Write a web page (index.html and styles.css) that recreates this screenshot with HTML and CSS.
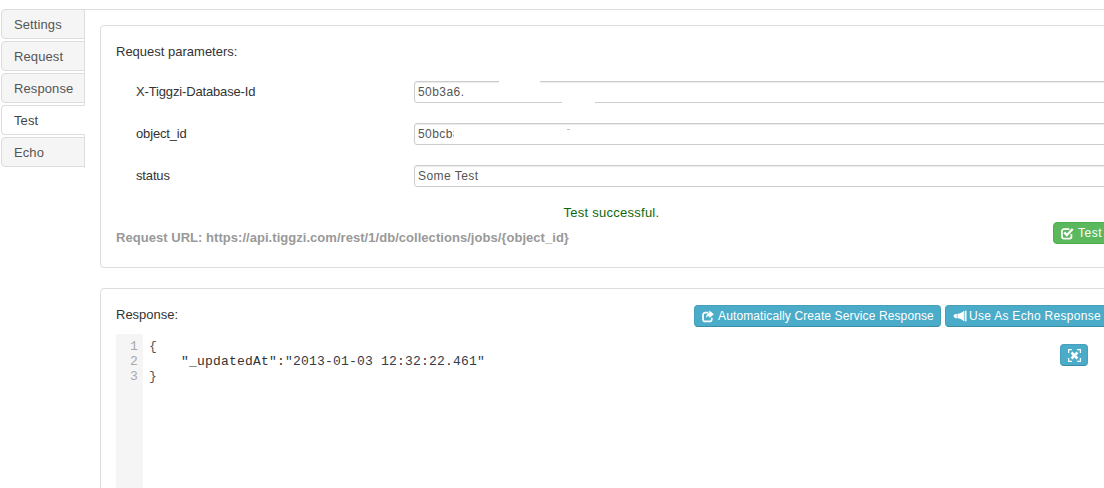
FILE: index.html
```html
<!DOCTYPE html>
<html lang="en">
<head>
<meta charset="utf-8">
<title>Service Test</title>
<link rel="stylesheet" href="styles.css">
</head>
<body>
<div class="app">
  <nav class="tabs">
    <a class="tab">Settings</a>
    <a class="tab">Request</a>
    <a class="tab">Response</a>
    <a class="tab active">Test</a>
    <a class="tab">Echo</a>
  </nav>
  <main class="content">
    <section class="panel panel-request">
      <div class="panel-title">Request parameters:</div>
      <div class="params">
        <label class="param-label">X-Tiggzi-Database-Id</label>
        <div class="field">
          <input class="input" type="text" value="50b3a6.">
          <span class="mask mask-a"></span>
          <span class="mask mask-b"></span>
          <span class="mask mask-c"></span>
        </div>
        <label class="param-label">object_id</label>
        <div class="field">
          <input class="input" type="text" value="50bcb8">
          <span class="mask mask-d"></span>
          <span class="speck"></span>
        </div>
        <label class="param-label">status</label>
        <div class="field">
          <input class="input" type="text" value="Some Test">
        </div>
      </div>
      <div class="status">Test successful.</div>
      <div class="url-row">
        <span class="url">Request URL: https://api.tiggzi.com/rest/1/db/collections/jobs/{object_id}</span>
        <button class="btn btn-green" type="button">
          <svg class="icon" viewBox="0 0 14 14"><path d="M11.2 7.5V10.6A2 2 0 0 1 9.2 12.6H3A2 2 0 0 1 1 10.6V4.4A2 2 0 0 1 3 2.4H9" fill="none" stroke="#fff" stroke-width="1.9"/><path d="M3.5 5.8 6.3 8.6 12.6 2.2" fill="none" stroke="#fff" stroke-width="2.5"/></svg>
          <span>Test</span>
        </button>
      </div>
    </section>
    <section class="panel panel-response">
      <div class="response-head">
        <div class="panel-title">Response:</div>
        <div class="actions">
          <button class="btn btn-blue btn-auto" type="button">
            <svg class="icon" viewBox="0 0 14 14"><path d="M7.5 2.6H3.6A2.4 2.4 0 0 0 1.2 5v5.4a2.4 2.4 0 0 0 2.4 2.4H9a2.4 2.4 0 0 0 2.4-2.4V8.6" fill="none" stroke="#fff" stroke-width="2"/><path d="M8.5 0 14 4.4 8.5 8.8V6.4C6.6 6.4 5.4 7.2 4.6 9 4.6 5.6 6.1 3 8.5 2.8Z" fill="#fff"/></svg>
            <span>Automatically Create Service Response</span>
          </button>
          <button class="btn btn-blue btn-echo" type="button">
            <svg class="icon icon-wide" viewBox="0 0 14 14"><path d="M12 .8h2v11.4h-2zM11.2 1V12C9 10.2 6.8 9.2 4.2 9V4C6.8 3.8 9 2.8 11.2 1ZM3.6 4.2V8.8H2.2A1.4 1.4 0 0 1 .8 7.6 1.1 1.1 0 0 1 0 6.5 1.1 1.1 0 0 1 .8 5.4 1.4 1.4 0 0 1 2.2 4.2Z" fill="#fff"/></svg>
            <span>Use As Echo Response</span>
          </button>
        </div>
      </div>
      <div class="expand-row">
        <button class="btn btn-blue btn-icon" type="button">
          <svg class="icon" viewBox="0 0 14 14"><path d="M.7 4.2V.7H4.2M9.8 .7H13.3V4.2M13.3 9.8V13.3H9.8M4.2 13.3H.7V9.8" fill="none" stroke="#fff" stroke-width="1.3"/><path d="M3.8 3.8 10.2 10.2M10.2 3.8 3.8 10.2" fill="none" stroke="#fff" stroke-width="2.8"/></svg>
        </button>
      </div>
      <div class="editor">
        <div class="gutter"><div>1</div><div>2</div><div>3</div></div>
<pre class="code"><span class="tok-brace">{</span>
    <span class="tok-key">"_updatedAt"</span>:<span class="tok-str">"2013-01-03 12:32:22.461"</span>
<span class="tok-brace">}</span></pre>
      </div>
    </section>
  </main>
</div>
</body>
</html>
```
FILE: styles.css
```css
html, body {
  margin: 0;
  height: 100%;
  overflow: hidden;
  background: #fff;
}

body {
  font-family: "Liberation Sans", Arial, sans-serif;
  font-size: 13px;
  line-height: 20px;
  color: #333;
}

.app {
  display: flex;
  align-items: flex-start;
  width: 1104px;
  height: 488px;
  padding: 9px 0 0 1px;
  box-sizing: border-box;
  overflow: hidden;
}

.tabs {
  display: flex;
  flex-direction: column;
  gap: 2px;
  flex: none;
  width: 84px;
  height: 159px;
  box-sizing: border-box;
  border-right: 1px solid #ddd;
}

.tab {
  display: block;
  height: 30px;
  box-sizing: border-box;
  margin-right: -1px;
  padding: 5px 0 0 12px;
  background: #f5f5f5;
  border: 1px solid #ddd;
  border-radius: 4px 0 0 4px;
  color: #555;
  letter-spacing: .1px;
}

.tab.active {
  background: #fff;
  border-right-color: #fff;
  color: #444;
}

.content {
  flex: none;
  width: 1055px;
  height: 479px;
  box-sizing: border-box;
  padding: 15px 15px 0;
  border-top: 1px solid #ddd;
  display: flex;
  flex-direction: column;
  gap: 20px;
  overflow: hidden;
}

.panel {
  flex: none;
  box-sizing: border-box;
  padding: 16px 15px 15px;
  background: #fff;
  border: 1px solid #ddd;
  border-radius: 4px;
}

.panel-request {
  height: 243px;
}

.panel-response {
  height: 240px;
  padding-top: 15px;
}

.panel-title {
  color: #333;
}

.params {
  display: grid;
  grid-template-columns: 278px 1fr;
  grid-auto-rows: 22px;
  row-gap: 20px;
  margin: 19px 0 0 20px;
  align-items: center;
}

.param-label {
  color: #333;
  letter-spacing: -.15px;
}

.field {
  position: relative;
  height: 22px;
}

.input {
  display: block;
  width: 100%;
  height: 22px;
  box-sizing: border-box;
  margin: 0;
  padding: 0 3px;
  border: 1px solid #ccc;
  border-radius: 3px;
  box-shadow: inset 0 1px 1px rgba(0, 0, 0, .08);
  font: 12px "Liberation Sans", Arial, sans-serif;
  letter-spacing: .45px;
  color: #555;
  background: #fff;
  outline: none;
}

.mask {
  position: absolute;
  background: #fff;
}

.mask-a {
  left: 85px;
  top: 0;
  width: 41px;
  height: 2px;
}

.mask-b {
  left: 50px;
  top: 2px;
  width: 690px;
  height: 19px;
}

.mask-c {
  left: 148px;
  top: 20px;
  width: 33px;
  height: 4px;
}

.mask-d {
  left: 40px;
  top: 2px;
  width: 690px;
  height: 19px;
}

.speck {
  position: absolute;
  left: 153px;
  top: 6px;
  width: 3px;
  height: 1px;
  background: #b5bcc4;
}

.status {
  margin-top: 16px;
  padding-right: 2px;
  text-align: center;
  color: #0a6a0a;
  letter-spacing: .25px;
}

.url-row {
  display: flex;
  align-items: flex-start;
  justify-content: space-between;
  margin-top: -1px;
}

.url {
  margin-top: 6px;
  font-weight: bold;
  color: #999;
  letter-spacing: .04px;
}

.btn {
  display: inline-flex;
  align-items: center;
  gap: 4px;
  height: 22px;
  box-sizing: border-box;
  margin: 0;
  padding: 0 6px 0 7px;
  border: 1px solid transparent;
  border-radius: 4px;
  font: 12px/20px "Liberation Sans", Arial, sans-serif;
  letter-spacing: .12px;
  color: #fff;
  white-space: nowrap;
}

.btn-green {
  background: #5cb85c;
  border-color: #4cae4c;
  letter-spacing: .5px;
}

.btn-blue {
  background: #4bacc9;
  border-color: #46a0bb #46a0bb #3a8ba5;
}

.btn-auto .icon {
  width: 12px;
}

.btn-echo {
  gap: 2px;
  padding-right: 7px;
  letter-spacing: .3px;
}

.btn-icon {
  justify-content: center;
  width: 28px;
  padding: 0;
}

.icon {
  flex: none;
  width: 13px;
  height: 13px;
}

.icon-wide {
  width: 14px;
}

.response-head {
  display: flex;
  justify-content: space-between;
  align-items: flex-start;
  height: 22px;
  margin-top: 1px;
}

.actions {
  display: flex;
  gap: 4px;
}

.editor {
  display: flex;
  margin-top: 7px;
  height: 200px;
  font: 13px/15px "Liberation Mono", "Courier New", monospace;
  letter-spacing: .2px;
}

.expand-row {
  height: 0;
  display: flex;
  justify-content: flex-end;
  padding-right: 21px;
}

.expand-row .btn-icon {
  margin-top: 17px;
}

.gutter {
  flex: none;
  width: 27px;
  box-sizing: border-box;
  padding: 5px 5px 0 0;
  background: #f5f5f5;
  text-align: right;
  color: #aaa;
}

.code {
  margin: 0;
  padding: 5px 0 0 6px;
  font: inherit;
  color: #333;
}

.tok-brace {
  color: #555;
}

.tok-str {
  color: #333c4a;
}
```
